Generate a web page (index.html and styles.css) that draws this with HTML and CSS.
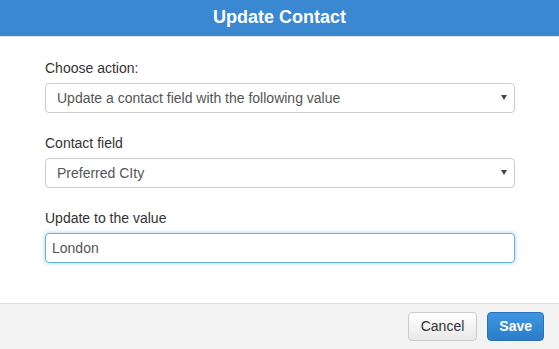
FILE: index.html
```html
<!DOCTYPE html>
<html>
<head>
<meta charset="utf-8">
<title>Update Contact</title>
<link rel="stylesheet" href="styles.css">
</head>
<body>
<div class="dialog">
  <div class="dialog-header">Update Contact</div>
  <div class="dialog-body">
    <div class="field">
      <label class="field-label">Choose action:</label>
      <div class="select-wrap">
        <div class="select">Update a contact field with the following value</div>
      </div>
    </div>
    <div class="field">
      <label class="field-label">Contact field</label>
      <div class="select-wrap">
        <div class="select">Preferred CIty</div>
      </div>
    </div>
    <div class="field">
      <label class="field-label">Update to the value</label>
      <div class="text-input">London</div>
    </div>
  </div>
  <div class="dialog-footer">
    <button class="btn btn-default">Cancel</button>
    <button class="btn btn-primary">Save</button>
  </div>
</div>
</body>
</html>
```

FILE: styles.css
```css
html, body {
  margin: 0;
  padding: 0;
  background: #ffffff;
}
body {
  font-family: "Liberation Sans", Arial, sans-serif;
  font-size: 14px;
  color: #333333;
}
.dialog {
  width: 559px;
  height: 349px;
  display: flex;
  flex-direction: column;
  overflow: hidden;
}
.dialog-header {
  height: 36px;
  line-height: 34px;
  background: #3a88d1;
  color: #ffffff;
  font-weight: bold;
  font-size: 18px;
  text-align: center;
  border-bottom: 1px solid #e2e2e2;
}
.dialog-body {
  flex: 1;
  padding: 21px 44px 20px 45px;
}
.field {
  margin-bottom: 20px;
}
.field-label {
  display: block;
  line-height: 20px;
  margin-bottom: 5px;
  color: #333333;
}
.select-wrap {
  position: relative;
}
.select-wrap::after {
  content: "";
  position: absolute;
  right: 8px;
  top: 12px;
  width: 0;
  height: 0;
  border-left: 3px solid transparent;
  border-right: 3px solid transparent;
  border-top: 5px solid #444444;
}
.select, .text-input {
  box-sizing: border-box;
  height: 30px;
  line-height: 28px;
  border: 1px solid #cccccc;
  border-radius: 4px;
  color: #555555;
  background: #ffffff;
}
.select {
  padding-left: 11px;
}
.text-input {
  padding-left: 6px;
  border-color: #66afe9;
  box-shadow: 0 0 4px rgba(102, 175, 233, 0.6);
}
.dialog-footer {
  height: 46px;
  box-sizing: border-box;
  border-top: 1px solid #dddddd;
  background: #f3f3f3;
  padding: 8px 15px 8px 0;
  display: flex;
  justify-content: flex-end;
  align-items: flex-start;
  gap: 10px;
}
.btn {
  font-family: "Liberation Sans", Arial, sans-serif;
  font-size: 14px;
  line-height: 19px;
  padding: 4px 12px;
  border-radius: 4px;
  border: 1px solid #cccccc;
  margin: 0;
}
.btn-default {
  color: #333333;
  background: linear-gradient(#ffffff, #e8e8e8);
  border-color: #cccccc;
}
.btn-primary {
  color: #ffffff;
  font-weight: bold;
  background: linear-gradient(#3e96e0, #2b7cca);
  border-color: #2a72ba;
  padding: 4px 11px;
}
```
